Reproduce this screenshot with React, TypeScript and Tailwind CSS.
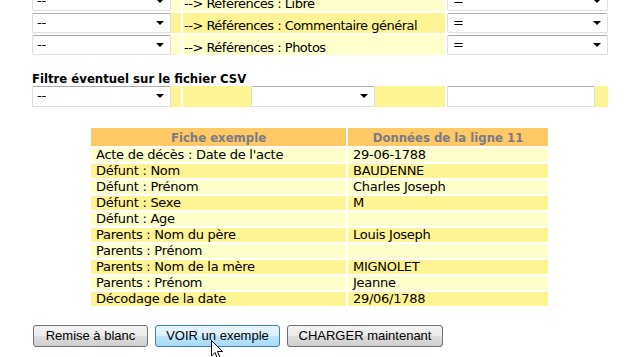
import React from 'react';

const LIGHT = 'bg-[#ffffcc]';
const DARK = 'bg-[#fff494]';

function FakeSelect({ value, className }: { value: string; className: string }) {
  return (
    <div
      className={`relative h-full bg-white border border-[#dcdfe5] border-t-[#abadb3] rounded-[2px] pl-[4px] leading-[17px] text-[13px] ${className}`}
    >
      {value}
      <span className="absolute right-[6px] top-[7px] w-0 h-0 border-l-[4px] border-r-[4px] border-t-[4px] border-l-transparent border-r-transparent border-t-black" />
    </div>
  );
}

const topRows = [
  { label: '--> Références : Libre', bg: LIGHT },
  { label: '--> Références : Commentaire général', bg: DARK },
  { label: '--> Références : Photos', bg: LIGHT },
];

const sample = [
  ["Acte de décès : Date de l'acte", '29-06-1788'],
  ['Défunt : Nom', 'BAUDENNE'],
  ['Défunt : Prénom', 'Charles Joseph'],
  ['Défunt : Sexe', 'M'],
  ['Défunt : Age', ''],
  ['Parents : Nom du père', 'Louis Joseph'],
  ['Parents : Prénom', ''],
  ['Parents : Nom de la mère', 'MIGNOLET'],
  ['Parents : Prénom', 'Jeanne'],
  ['Décodage de la date', '29/06/1788'],
];

const bold = "font-['DejaVu_Sans_Condensed','DejaVu_Sans',sans-serif] font-bold tracking-[0px]";

const btnBase =
  "h-[22px] rounded-[3px] border font-['Liberation_Sans',Arial,sans-serif] tracking-[0px] text-[13px] text-black leading-[20px] text-center";
const btnGray =
  'border-[#707070] bg-[linear-gradient(to_bottom,#f2f2f2_0%,#ebebeb_50%,#dddddd_51%,#cfcfcf_100%)]';
const btnHover =
  'border-[#3c7fb1] bg-[linear-gradient(to_bottom,#eaf6fd_0%,#d9f0fc_50%,#bee6fd_51%,#a7d9f5_100%)]';

export default function App() {
  return (
    <div className="relative w-[637px] h-[357px] overflow-hidden bg-white font-['DejaVu_Sans',Verdana,sans-serif] text-[13px] tracking-[-0.27px] text-black">
      <div className="pl-[32px] mt-[-9px]">
        {/* column mapping rows */}
        {topRows.map((r) => (
          <div key={r.label} className="flex gap-[2px] h-[20px] mb-[2px]">
            <div className={`w-[149px] ${r.bg}`}>
              <FakeSelect value="--" className="w-[139px]" />
            </div>
            <div className={`w-[262px] ${r.bg} pl-[1px] pt-[5px] leading-[15px] tracking-[-0.5px] whitespace-nowrap`}>{r.label}</div>
            <div className="w-[161px]">
              <FakeSelect value="=" className="w-full pl-[5px]" />
            </div>
          </div>
        ))}

        <div className={`mt-[16px] h-[15px] leading-[15px] ${bold}`}>Filtre éventuel sur le fichier CSV</div>

        <div className="flex gap-[2px] h-[21px]">
          <div className={`w-[149px] ${DARK}`}>
            <FakeSelect value="--" className="w-[139px]" />
          </div>
          <div className={`w-[262px] ${DARK} pl-[68px]`}>
            <FakeSelect value="" className="w-[124px]" />
          </div>
          <div className={`w-[161px] ${DARK}`}>
            <div className="w-[148px] h-full bg-white border border-[#dcdfe5] border-t-[#abadb3] rounded-[2px]" />
          </div>
        </div>

        {/* sample record */}
        <div className="ml-[59px] mt-[21px] w-[457px]">
          <div className="flex gap-[2px] h-[18px] bg-white">
            <div className={`w-[255px] bg-[#ffc966] text-center text-[#7a7a88] leading-[19px] ${bold}`}>Fiche exemple</div>
            <div className={`w-[200px] bg-[#ffc966] text-center text-[#7a7a88] leading-[19px] ${bold}`}>Données de la ligne 11</div>
          </div>
          {sample.map(([k, v], i) => {
            const bg = i % 2 === 0 ? LIGHT : DARK;
            return (
              <div key={i} className="flex gap-[2px] h-[14px] mt-[2px] leading-[14px] whitespace-nowrap">
                <div className={`w-[255px] ${bg} pl-[5px]`}>{k}</div>
                <div className={`w-[200px] ${bg} pl-[5px]`}>{v}</div>
              </div>
            );
          })}
        </div>

        <div className="flex gap-[7px] ml-[1px] mt-[19px]">
          <div className={`${btnBase} ${btnGray} w-[115px]`}>Remise à blanc</div>
          <div className={`${btnBase} ${btnHover} w-[125px]`}>VOIR un exemple</div>
          <div className={`${btnBase} ${btnGray} w-[156px]`}>CHARGER maintenant</div>
        </div>
      </div>

      {/* mouse pointer */}
      <svg className="absolute left-[211px] top-[340px]" width="13" height="20" viewBox="0 0 13 20">
        <path d="M0.5 0.5 L0.5 16 L4 12.5 L6.5 18.5 L9 17.5 L6.5 11.5 L11.5 11.5 Z" fill="white" stroke="black" strokeWidth="1" strokeLinejoin="miter" />
      </svg>
    </div>
  );
}
